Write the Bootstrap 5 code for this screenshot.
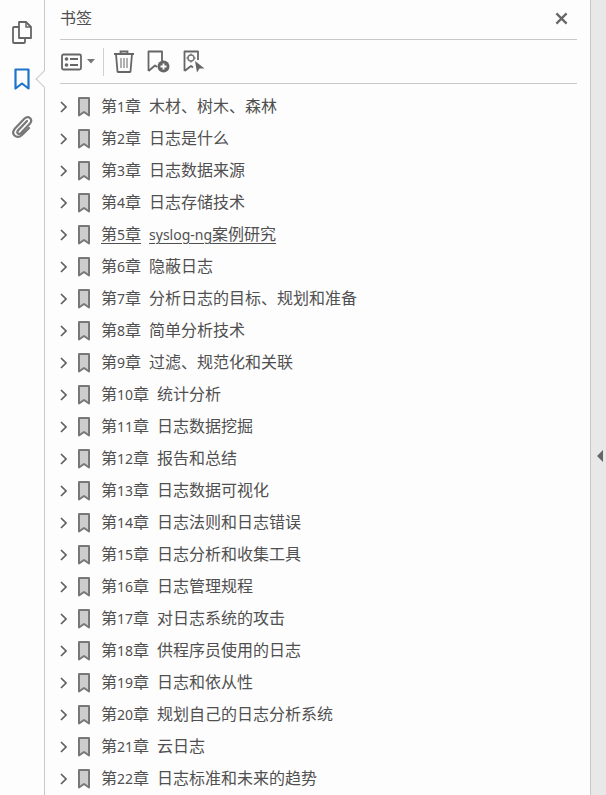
<!DOCTYPE html>
<html lang="zh-CN">
<head>
    <meta charset="UTF-8">
    <meta name="viewport" content="width=device-width, initial-scale=1.0">
    <title>书签</title>
    <link href="https://cdn.jsdelivr.net/npm/bootstrap@5.3.2/dist/css/bootstrap.min.css" rel="stylesheet">
    <style>
        body{
            background: #fdfdfd;
            color: #505050;
            font-family: "Noto Sans", "Noto Sans CJK SC", sans-serif;
            font-size: 16px;
            overflow: hidden;
        }
        .app-shell{ height: 795px; }
        .side-rail{
            width: 45px;
            border-right: 1px solid #c8c8c8;
            padding-top: 21px;
            gap: 24px;
        }
        .rail-notch{
            position: absolute;
            left: 38px;
            top: 73px;
            width: 12px;
            height: 12px;
            background: #fdfdfd;
            border-left: 1px solid #c8c8c8;
            border-bottom: 1px solid #c8c8c8;
            transform: rotate(45deg);
        }
        .bm-panel{ padding: 0 13px 0 15px; min-width: 0; }
        .panel-head{
            height: 40px;
            border-bottom: 1px solid #c8c8c8;
            line-height: 36px;
        }
        .head-close{ margin: 12px 9px 0 0; }
        .panel-tools{
            height: 44px;
            border-bottom: 1px solid #c8c8c8;
            padding-left: 1px;
        }
        .tool-caret{ margin-left: 5px; }
        .tool-sep{
            width: 1px;
            height: 28px;
            background: #d0d0d0;
            margin: 0 9px 0 7px;
        }
        .tool-add{ margin-left: 12px; }
        .tool-pick{ margin-left: 13px; }
        .bm-list{ padding-top: 7px; }
        .bm-row{
            height: 32px;
            line-height: 30px;
            white-space: nowrap;
        }
        .bm-chev{ margin-right: 11px; flex: none; }
        .bm-mark{ margin-right: 11px; flex: none; }
        .bm-text{ margin-bottom: 2px; }
        .bm-num{ margin-right: 8px; }
        .bm-latin{ font-size: 14px; }
        .bm-link{
            text-decoration: underline;
            text-decoration-thickness: 1px;
            text-underline-offset: 3px;
        }
        .side-strip{
            width: 16px;
            background: #e8e8e8;
            border-left: 1px solid #c8c8c8;
        }
        .strip-arrow{ margin: 117px 0 0 3px; }
    </style>
</head>
<body>
<svg width="0" height="0" class="position-absolute">
    <symbol id="mark" viewBox="0 0 12 20">
        <path d="M1 1H11V18.5L6 15L1 18.5Z" fill="#cdcdcd" stroke="#787878" stroke-width="2" stroke-linejoin="round"/>
    </symbol>
    <symbol id="chev" viewBox="0 0 7 12">
        <path d="M1 1L6 6L1 11" fill="none" stroke="#606060" stroke-width="1.7"/>
    </symbol>
</svg>

<div class="app-shell d-flex position-relative">
    <div class="side-rail d-flex flex-column align-items-center flex-shrink-0">
        <svg width="20" height="23" viewBox="0 0 20 23">
            <path d="M7 1H14L19 6V17H7Z" fill="none" stroke="#666" stroke-width="1.8" stroke-linejoin="round"/>
            <path d="M14 1V6H19" fill="none" stroke="#666" stroke-width="1.5"/>
            <path d="M7 6H2Q1 6 1 7V21Q1 22 2 22H12Q13 22 13 21V17" fill="none" stroke="#666" stroke-width="1.8"/>
        </svg>
        <svg width="16" height="23" viewBox="0 0 16 23">
            <path d="M1.5 1.5H14.5V20.5L8 15.5L1.5 20.5Z" fill="none" stroke="#1e74c8" stroke-width="2.2" stroke-linejoin="round"/>
        </svg>
        <svg width="22" height="24" viewBox="0 0 22 24">
            <path d="M16 6L7 15.5Q5.5 17.5 7 18.5Q8.5 19.5 10 18L19 8.5Q21.5 5.5 19 3Q16.5 1 13.5 3.5L4 13.5Q0.5 17.5 3.5 20.5Q7 23.5 11 20L18 13" fill="none" stroke="#777" stroke-width="2.2" stroke-linecap="round"/>
        </svg>
    </div>
    <div class="rail-notch"></div>

    <div class="bm-panel flex-grow-1 d-flex flex-column">
        <div class="panel-head d-flex justify-content-between">
            <span>书签</span>
            <svg class="head-close" width="13" height="13" viewBox="0 0 14 14">
                <path d="M1.5 1.5L12.5 12.5M12.5 1.5L1.5 12.5" stroke="#666" stroke-width="2.4"/>
            </svg>
        </div>
        <div class="panel-tools d-flex align-items-center">
            <svg width="21" height="18" viewBox="0 0 21 18">
                <rect x="1" y="1.5" width="19" height="15" rx="1.5" fill="none" stroke="#666" stroke-width="1.8"/>
                <circle cx="5.5" cy="6" r="1.8" fill="#666"/>
                <circle cx="5.5" cy="12" r="1.8" fill="#666"/>
                <path d="M9 6H17M9 12H17" stroke="#666" stroke-width="1.8"/>
            </svg>
            <svg class="tool-caret" width="9" height="5" viewBox="0 0 9 5">
                <path d="M0 0H8L4 4.5Z" fill="#777"/>
            </svg>
            <div class="tool-sep"></div>
            <svg width="22" height="23" viewBox="0 0 22 23">
                <path d="M1 4H21M7.5 4V1.5H14.5V4" fill="none" stroke="#666" stroke-width="1.8"/>
                <path d="M3 4L4.5 21.5Q4.6 22 5.5 22H16.5Q17.4 22 17.5 21.5L19 4" fill="none" stroke="#666" stroke-width="1.8"/>
                <path d="M8 8V18M11 8V18M14 8V18" stroke="#888" stroke-width="1.3"/>
            </svg>
            <svg class="tool-add" width="23" height="23" viewBox="0 0 23 23">
                <path d="M1.5 21V1.5H15V12M1.5 21L8 15.5L10 17" fill="none" stroke="#666" stroke-width="1.8" stroke-linejoin="round"/>
                <circle cx="16.5" cy="16.5" r="6" fill="#666"/>
                <path d="M13.5 16.5H19.5M16.5 13.5V19.5" stroke="#fff" stroke-width="1.8"/>
            </svg>
            <svg class="tool-pick" width="22" height="23" viewBox="0 0 22 23">
                <path d="M1.5 21V1.5H15V10M1.5 21L8 16L10 17.5" fill="none" stroke="#666" stroke-width="1.8" stroke-linejoin="round"/>
                <circle cx="8" cy="8" r="3" fill="none" stroke="#777" stroke-width="1.5"/>
                <path d="M8 3.5V5M8 11V12.5M3.5 8H5M11 8H12.5" stroke="#777" stroke-width="1.3"/>
                <path d="M12 11L21.5 18.5H16.5L14 22.5Z" fill="#666"/>
            </svg>
        </div>
        <div class="bm-list" id="bmList"></div>
    </div>

    <div class="side-strip d-flex align-items-center justify-content-center flex-shrink-0">
        <svg class="strip-arrow" width="6" height="12" viewBox="0 0 6 12"><path d="M6 0V12L0 6Z" fill="#666"/></svg>
    </div>
</div>

<script>
    const chapters = ['木材、树木、森林', '日志是什么', '日志数据来源', '日志存储技术', 'syslog-ng案例研究',
        '隐蔽日志', '分析日志的目标、规划和准备', '简单分析技术', '过滤、规范化和关联', '统计分析',
        '日志数据挖掘', '报告和总结', '日志数据可视化', '日志法则和日志错误', '日志分析和收集工具',
        '日志管理规程', '对日志系统的攻击', '供程序员使用的日志', '日志和依从性', '规划自己的日志分析系统',
        '云日志', '日志标准和未来的趋势'];

    // latin text and digits are smaller than the CJK in the reference
    const small = s => s.replace(/[\x21-\x7e]+/g, m => `<span class="bm-latin">${m}</span>`);

    document.getElementById('bmList').innerHTML = chapters.map((title, i) => `
        <div class="bm-row d-flex align-items-center">
            <svg class="bm-chev" width="7" height="12"><use href="#chev"/></svg>
            <svg class="bm-mark" width="12" height="20"><use href="#mark"/></svg>
            <span class="bm-text ${i === 4 ? 'bm-link' : ''}"><span class="bm-num">第<span class="bm-latin">${i + 1}</span>章</span>${small(title)}</span>
        </div>`).join('');
</script>
<script src="https://cdn.jsdelivr.net/npm/bootstrap@5.3.2/dist/js/bootstrap.bundle.min.js"></script>
</body>
</html>
